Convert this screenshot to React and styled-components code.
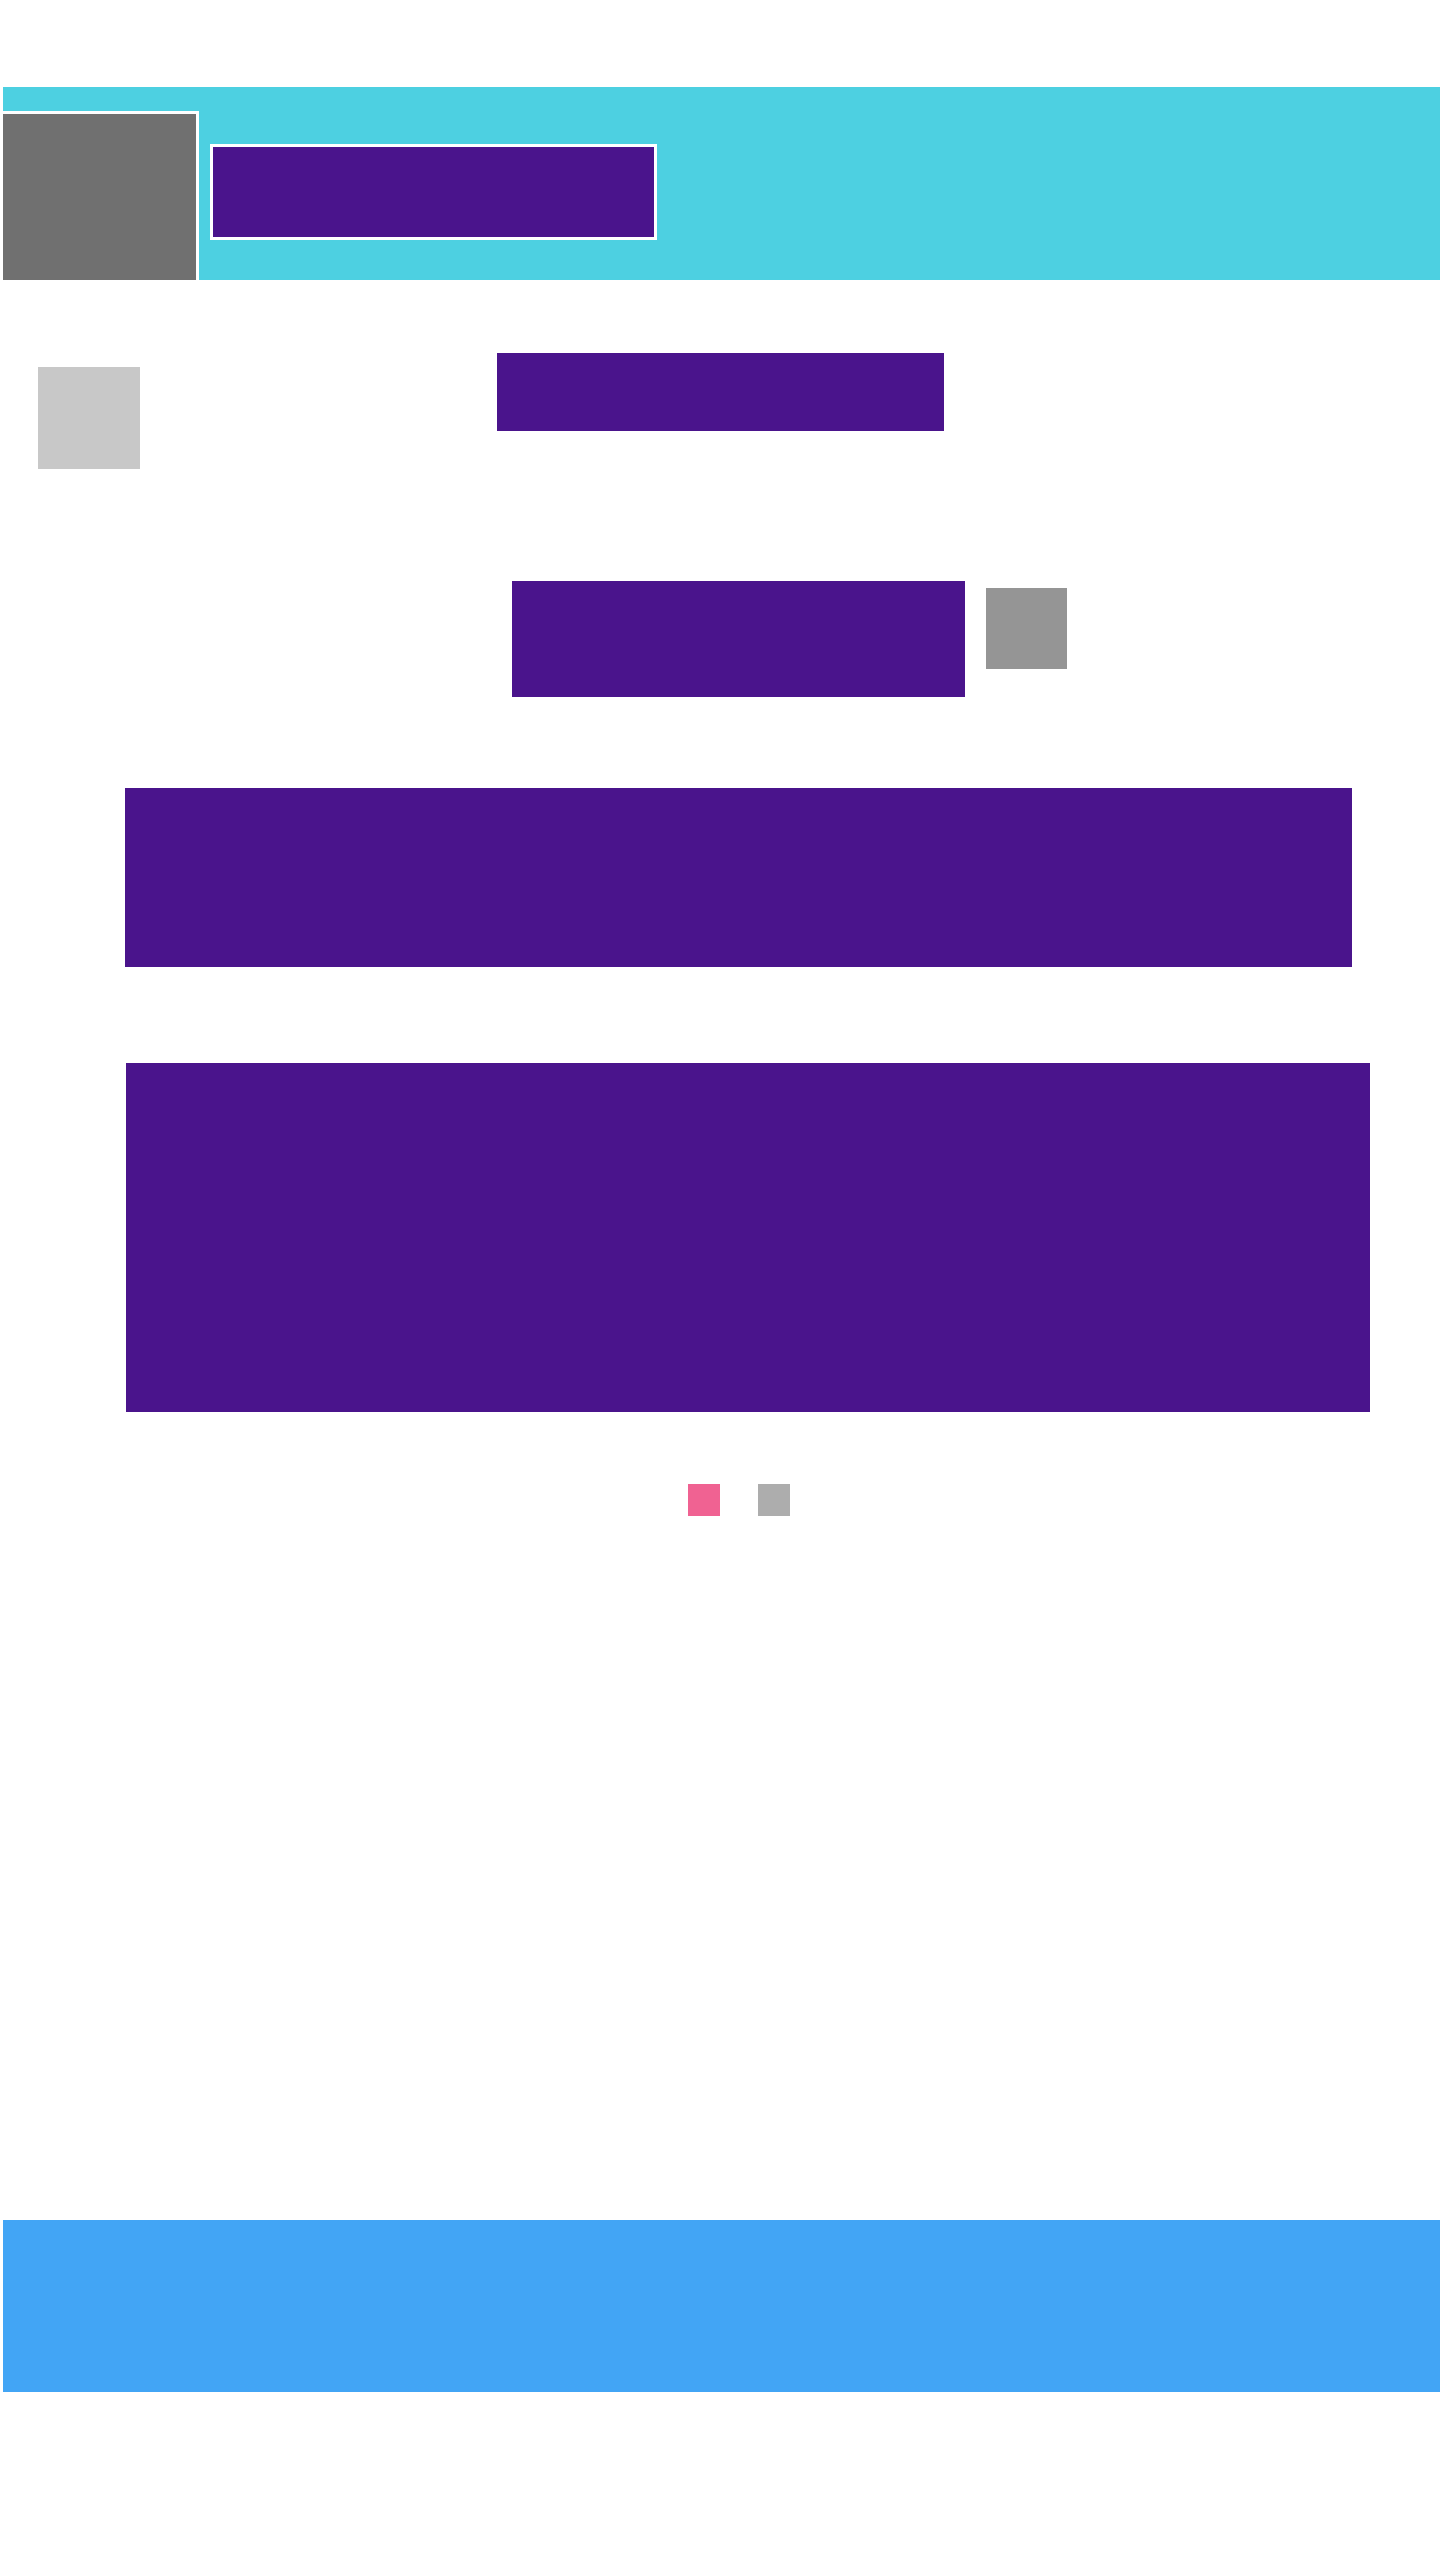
import React from 'react'
import styled, { createGlobalStyle } from 'styled-components'

const GlobalStyle = createGlobalStyle`
  html, body {
    margin: 0;
    padding: 0;
    background: #ffffff;
    font-family: Roboto, "Liberation Sans", sans-serif;
  }
`

const Page = styled.div`
  min-height: 2560px;
  padding-top: 87px;
  box-sizing: border-box;
  overflow: hidden;
`

const Header = styled.header`
  margin-left: 3px;
  height: 193px;
  background: #4dd0e1;
  display: flex;
  align-items: flex-start;
`

const Avatar = styled.div`
  margin-left: -3px;
  margin-top: 24px;
  width: 199px;
  height: 169px;
  box-sizing: border-box;
  background: #707070;
  border: 3px solid #ffffff;
  border-bottom: none;
  flex-shrink: 0;
`

const NameBox = styled.div`
  margin-left: 11px;
  margin-top: 57px;
  width: 447px;
  height: 96px;
  box-sizing: border-box;
  background: #4a148c;
  border: 3px solid #ffffff;
`

const TitleRow = styled.div`
  display: grid;
  grid-template-columns: 1fr auto 1fr;
  align-items: start;
  margin-top: 73px;
`

const BackIcon = styled.div`
  margin-left: 38px;
  margin-top: 14px;
  width: 102px;
  height: 102px;
  background: #c8c8c8;
`

const Block = styled.div`
  width: ${({ $w }) => $w}px;
  height: ${({ $h }) => $h}px;
  background: #4a148c;
  flex-shrink: 0;
`

const InfoRow = styled.div`
  display: flex;
  align-items: flex-start;
  gap: 21px;
  padding-left: 512px;
  margin-top: 112px;
`

const SideIcon = styled.div`
  margin-top: 7px;
  width: 81px;
  height: 81px;
  background: #959595;
`

const Section = styled.section`
  padding-left: ${({ $left }) => $left}px;
  margin-top: ${({ $top }) => $top}px;
`

const Dots = styled.div`
  display: flex;
  gap: 38px;
  padding-left: 688px;
  margin-top: 72px;
`

const Dot = styled.span`
  width: 32px;
  height: 32px;
  background: ${({ $active }) => ($active ? '#f06292' : '#adadad')};
`

const Footer = styled.footer`
  margin-left: 3px;
  margin-top: 704px;
  height: 172px;
  background: #42a5f5;
`

export default function App() {
  return (
    <>
      <GlobalStyle />
      <Page>
        <Header>
          <Avatar />
          <NameBox />
        </Header>

        <TitleRow>
          <BackIcon />
          <Block $w={447} $h={78} />
          <div />
        </TitleRow>

        <InfoRow>
          <Block $w={453} $h={116} />
          <SideIcon />
        </InfoRow>

        <Section $left={125} $top={91}>
          <Block $w={1227} $h={179} />
        </Section>

        <Section $left={126} $top={96}>
          <Block $w={1244} $h={349} />
        </Section>

        <Dots>
          <Dot $active />
          <Dot />
        </Dots>

        <Footer />
      </Page>
    </>
  )
}
